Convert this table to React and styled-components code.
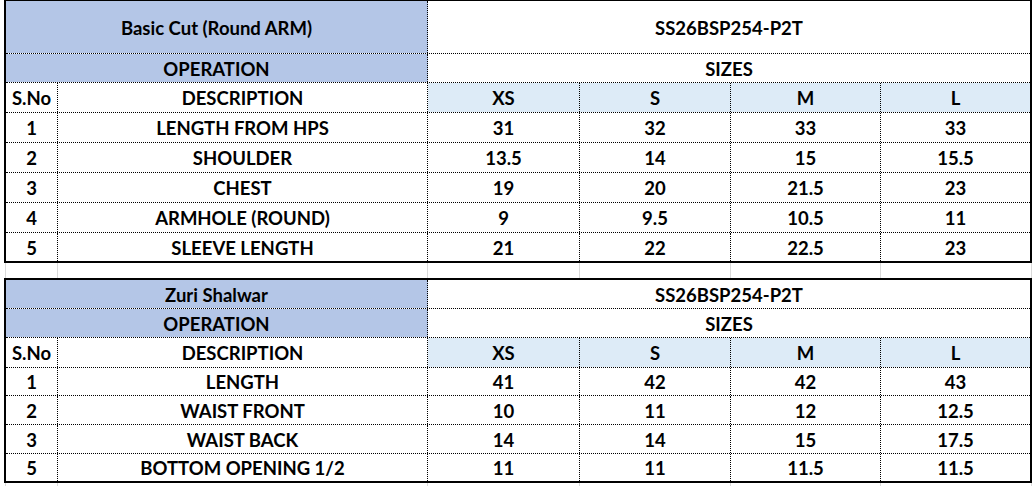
import React from 'react';
import styled, { createGlobalStyle } from 'styled-components';

const GlobalStyle = createGlobalStyle`
  html, body {
    margin: 0;
    padding: 0;
    background: #fff;
  }
  body {
    font-family: Lato, "Liberation Sans", sans-serif;
  }
`;

const COLS = '52px 370px 152px 151px 150px 149px';
const GRID_COLS = '2px 52px 370px 152px 151px 150px 151px';

const Sheet = styled.div`
  width: 1034px;
  height: 486px;
  overflow: hidden;
  padding-left: 4px;
  box-sizing: border-box;
`;

const Table = styled.div`
  width: 1028px;
  box-sizing: border-box;
  border: 2px solid #000;
  border-top-width: ${p => (p.$clipped ? 1 : 2)}px;
`;

const Row = styled.div`
  display: grid;
  grid-template-columns: ${COLS};
  height: ${p => p.$h}px;
  box-sizing: border-box;
  border-bottom: 1px dotted #000;

  &:last-child {
    border-bottom: none;
  }
`;

const Cell = styled.div`
  grid-column: span ${p => p.$span || 1};
  display: flex;
  align-items: center;
  justify-content: center;
  box-sizing: border-box;
  padding-top: 1px;
  border-right: 1px dotted #000;
  background: ${p => p.$bg || 'transparent'};
  color: #000;
  font-size: 18.5px;
  font-weight: 700;
  white-space: nowrap;

  &:last-child {
    border-right: none;
  }
`;

const Gap = styled.div`
  display: grid;
  grid-template-columns: ${GRID_COLS};
  height: ${p => p.$h}px;
  margin-left: -4px;
  padding-left: 4px;
`;

const GapCell = styled.div`
  box-sizing: border-box;
  border-right: 1px solid #d9d9d9;
`;

const HEAD_BLUE = '#b4c6e7';
const SIZE_BLUE = '#ddebf7';
const SIZES = ['XS', 'S', 'M', 'L'];

const tables = [
  {
    title: 'Basic Cut (Round ARM)',
    code: 'SS26BSP254-P2T',
    heights: [53, 29, 30],
    rowHeights: [30, 30, 30, 30, 28],
    rows: [
      ['1', 'LENGTH FROM HPS', '31', '32', '33', '33'],
      ['2', 'SHOULDER', '13.5', '14', '15', '15.5'],
      ['3', 'CHEST', '19', '20', '21.5', '23'],
      ['4', 'ARMHOLE (ROUND)', '9', '9.5', '10.5', '11'],
      ['5', 'SLEEVE LENGTH', '21', '22', '22.5', '23'],
    ],
  },
  {
    title: 'Zuri Shalwar',
    code: 'SS26BSP254-P2T',
    heights: [29, 29, 30],
    rowHeights: [28, 29, 29, 27],
    rows: [
      ['1', 'LENGTH', '41', '42', '42', '43'],
      ['2', 'WAIST FRONT', '10', '11', '12', '12.5'],
      ['3', 'WAIST BACK', '14', '14', '15', '17.5'],
      ['5', 'BOTTOM OPENING 1/2', '11', '11', '11.5', '11.5'],
    ],
  },
];

const GridGap = ({ h }) => (
  <Gap $h={h}>
    {Array.from({ length: 7 }).map((_, i) => (
      <GapCell key={i} />
    ))}
  </Gap>
);

const SpecTable = ({ data, clipped }) => (
  <Table $clipped={clipped}>
    <Row $h={data.heights[0]}>
      <Cell $span={2} $bg={HEAD_BLUE}>{data.title}</Cell>
      <Cell $span={4}>{data.code}</Cell>
    </Row>
    <Row $h={data.heights[1]}>
      <Cell $span={2} $bg={HEAD_BLUE}>OPERATION</Cell>
      <Cell $span={4}>SIZES</Cell>
    </Row>
    <Row $h={data.heights[2]}>
      <Cell>S.No</Cell>
      <Cell>DESCRIPTION</Cell>
      {SIZES.map(s => (
        <Cell key={s} $bg={SIZE_BLUE}>{s}</Cell>
      ))}
    </Row>
    {data.rows.map((row, rowIndex) => (
      <Row key={rowIndex} $h={data.rowHeights[rowIndex]}>
        {row.map((value, i) => (
          <Cell key={i}>{value}</Cell>
        ))}
      </Row>
    ))}
  </Table>
);

const App = () => (
  <>
    <GlobalStyle />
    <Sheet>
      <SpecTable data={tables[0]} clipped />
      <GridGap h={15} />
      <SpecTable data={tables[1]} />
      <GridGap h={3} />
    </Sheet>
  </>
);

export default App;
